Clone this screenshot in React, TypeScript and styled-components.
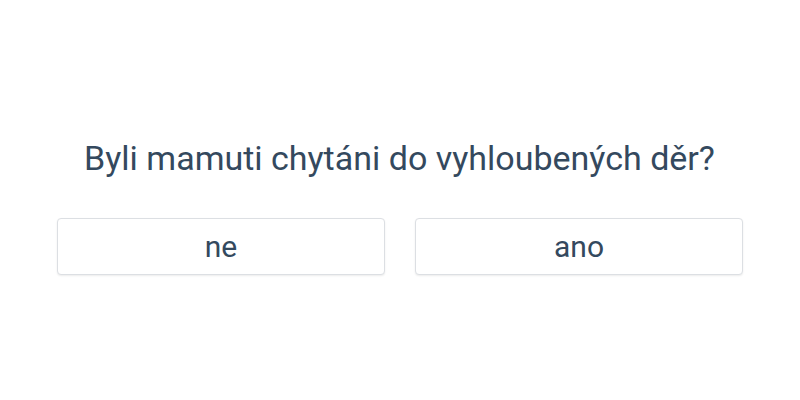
import React from "react";
import styled, { createGlobalStyle } from "styled-components";

const Global = createGlobalStyle`
  html, body { margin: 0; padding: 0; background: #fff; }
  body { font-family: Roboto, "Noto Sans", sans-serif; color: #34495e; }
`;

const Page = styled.div`
  width: 800px;
  height: 400px;
  display: flex;
  flex-direction: column;
  align-items: center;
  padding-top: 136px;
  box-sizing: border-box;
`;

const Question = styled.h1`
  margin: 0 1px 0 0;
  font-size: 34px;
  font-weight: 400;
  line-height: 44px;
  color: #34495e;
`;

const Answers = styled.div`
  display: flex;
  gap: 30px;
  margin-top: 38px;
  width: 686px;
`;

const Answer = styled.button`
  flex: 1;
  height: 57px;
  background: #fff;
  border: 1px solid #dcdfe3;
  border-radius: 4px;
  box-shadow: 0 1px 2px rgba(0, 0, 0, 0.08);
  font-family: Roboto, "Noto Sans", sans-serif;
  font-size: 30px;
  color: #34495e;
  padding: 0;
  cursor: pointer;
`;

export default function App() {
  return (
    <>
      <Global />
      <Page>
        <Question>Byli mamuti chytáni do vyhloubených děr?</Question>
        <Answers>
          <Answer>ne</Answer>
          <Answer>ano</Answer>
        </Answers>
      </Page>
    </>
  );
}
